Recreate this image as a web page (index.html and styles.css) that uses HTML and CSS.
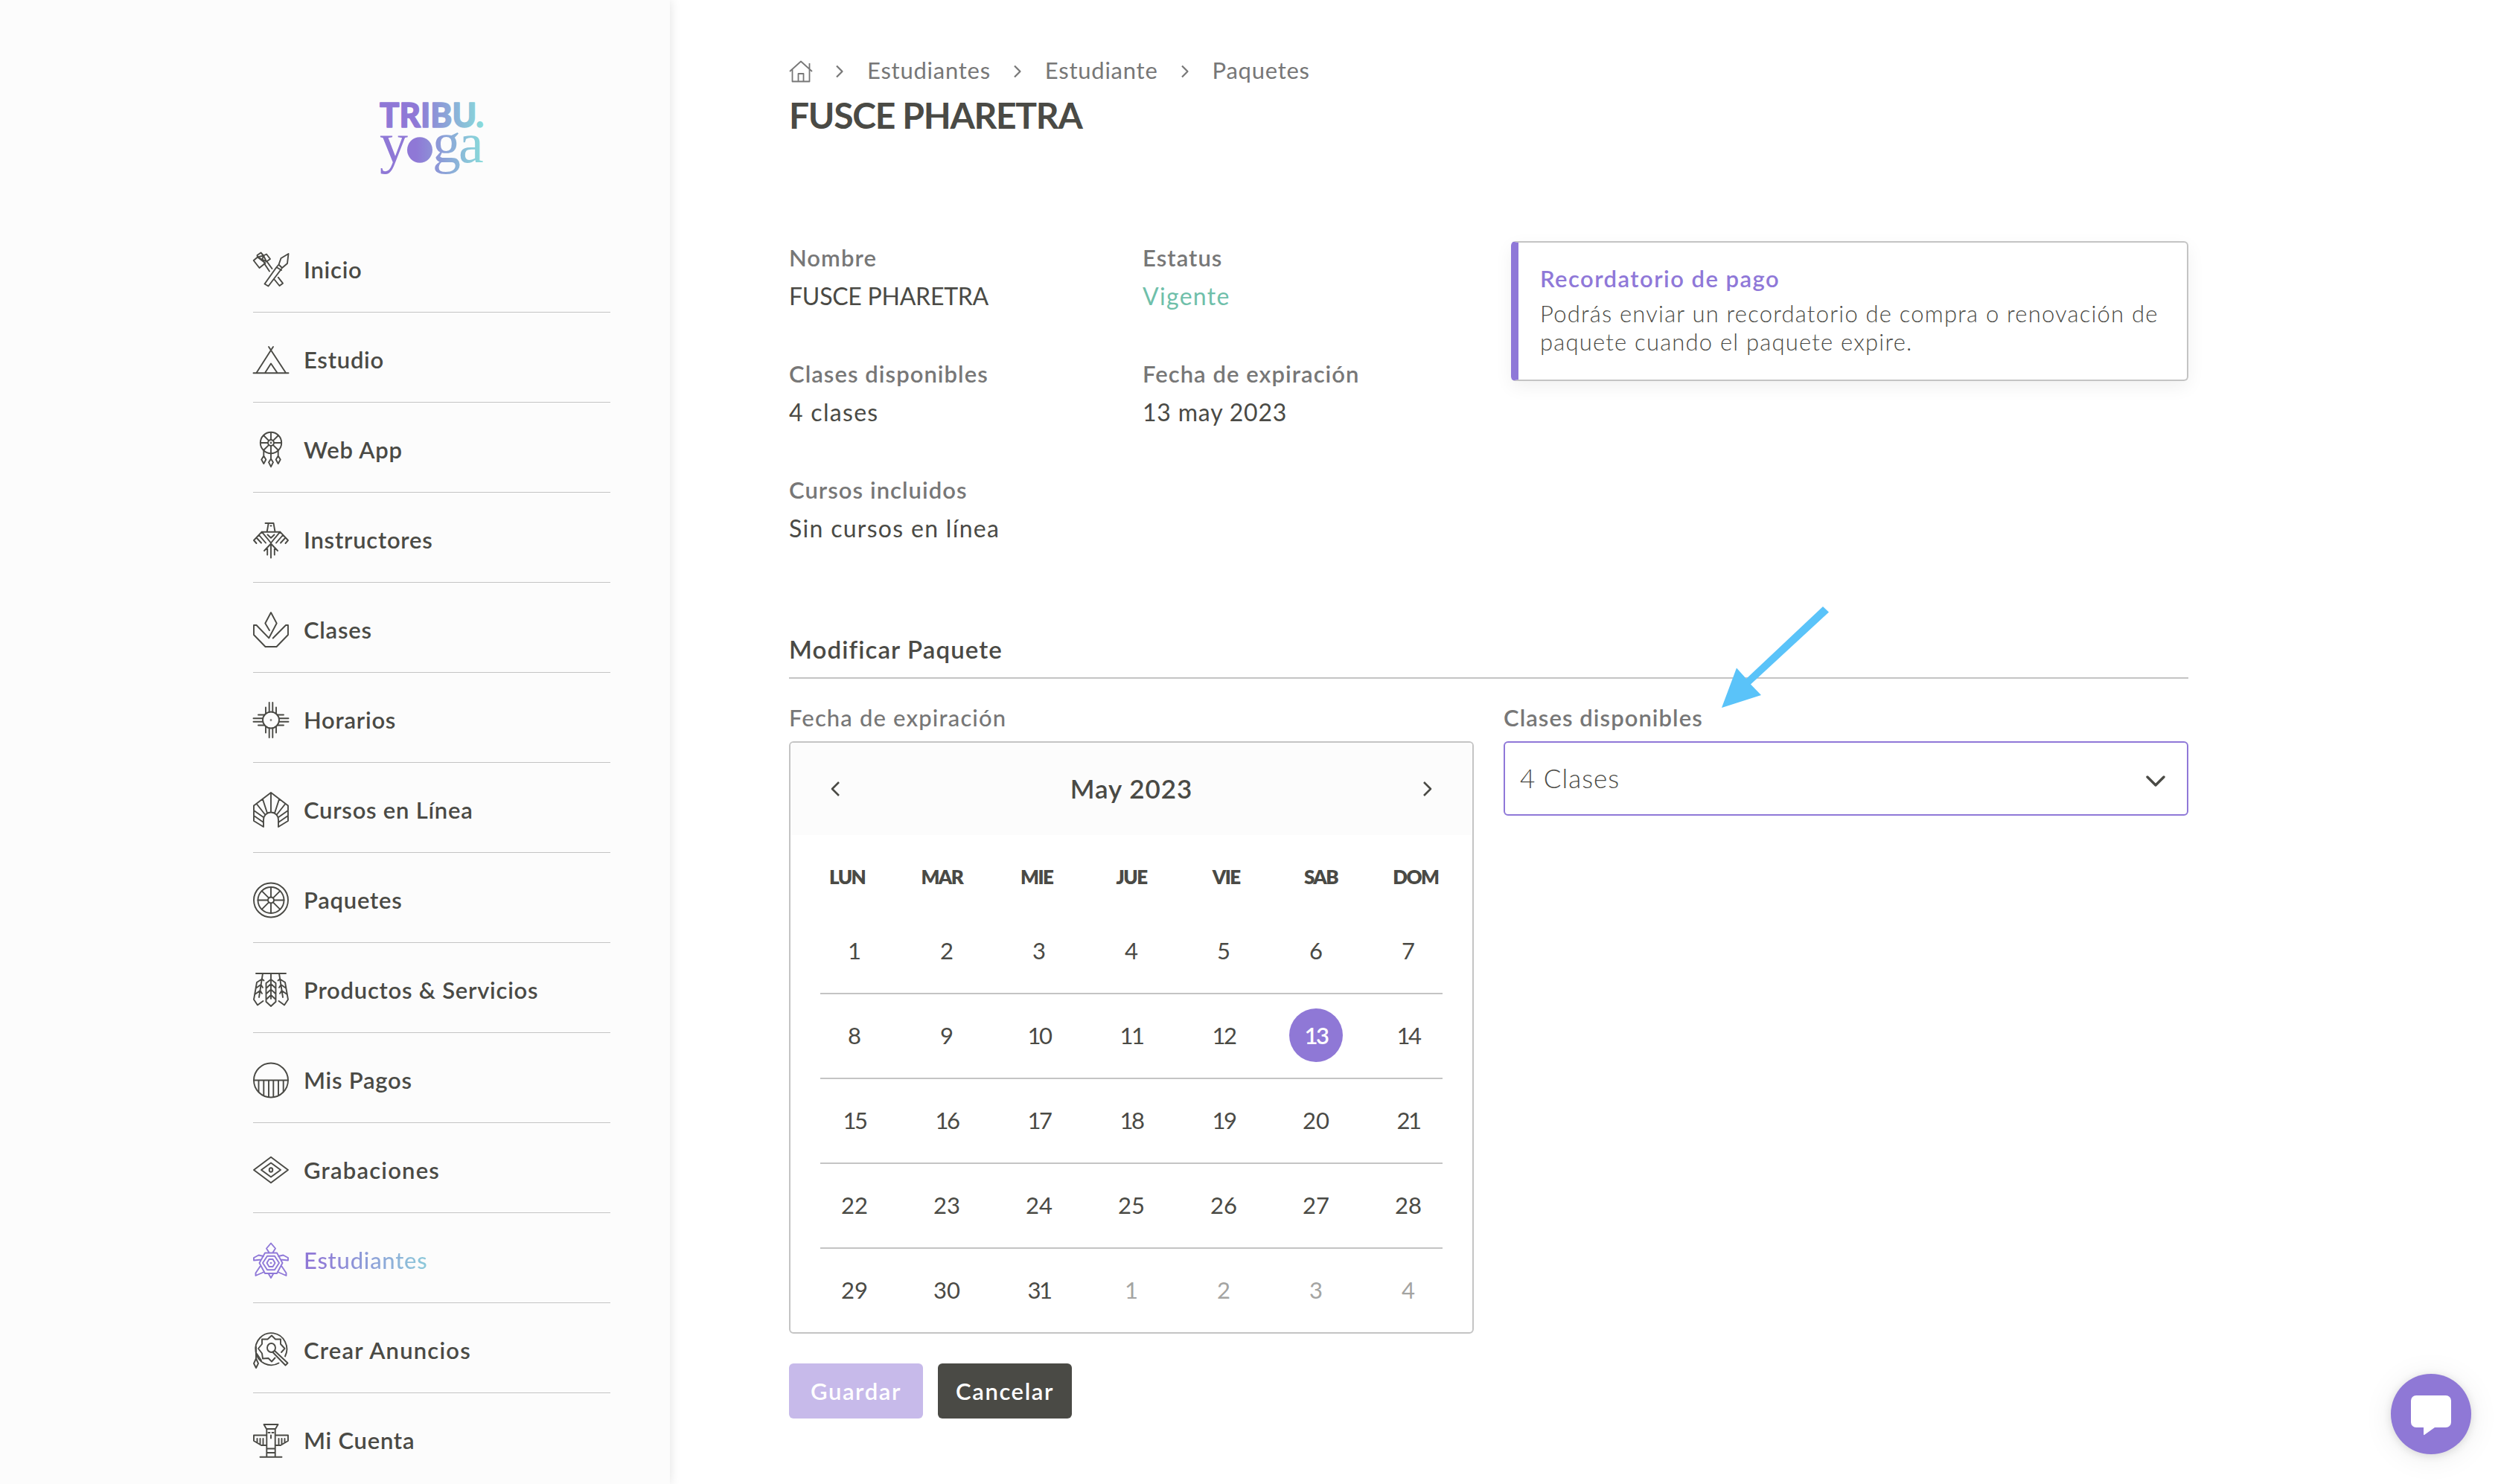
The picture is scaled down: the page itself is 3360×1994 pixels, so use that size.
FILE: index.html
```html
<!DOCTYPE html>
<html lang="es">
<head>
<meta charset="utf-8">
<title>Tribu Yoga</title>
<link rel="stylesheet" href="styles.css">
</head>
<body>
<aside class="sidebar">
  <svg class="logo" width="144" height="124" viewBox="508 120 144 124" role="img" aria-label="Tribu yoga">
    <defs><linearGradient id="brand" gradientUnits="userSpaceOnUse" x1="510" y1="0" x2="650" y2="0"><stop offset="0.35" stop-color="#8f78d6"/><stop offset="1" stop-color="#88dcda"/></linearGradient></defs>
    <g fill="url(#brand)">
      <text class="logo-sans" x="510" y="171" textLength="140" lengthAdjust="spacingAndGlyphs">TRIBU.</text>
      <text class="logo-serif" x="510" y="218">y</text>
      <ellipse cx="564" cy="201.500" rx="17" ry="17.300"/>
      <text class="logo-serif" x="581" y="218">g</text>
      <text class="logo-serif" x="616" y="218">a</text>
    </g>
  </svg>
  <nav class="nav">
    <a class="nav-item"><svg class="icon" viewBox="0 0 48 48"><path d="M47.5 3 37.5 9l-3 8.500 4.500 4.500 7-6zM34.500 17.500 31.500 21l6.500 4M31.500 21 15.500 43.500l5 3L38 23.500M33.700 34.700l6.300 8-4.500 3.300-6.500-8M.7 12 8.500 22l8-6.500L6 7.500zM6 7.500 5.500 5l5-3.500 3.500 4L6 7.500l12 6M14 5.500 18 3.500 23 10l-5 3.500L14 5.500l-2 6M15 16l7 10.500M19 14l6.500 9"/></svg><span>Inicio</span></a>
    <a class="nav-item"><svg class="icon" viewBox="0 0 48 48"><path d="M.5 42.300h47M21 7l3 4.500L27 7M4.500 42 24 11.500 44 42M16 42l8-12.500L32.500 42"/></svg><span>Estudio</span></a>
    <a class="nav-item"><svg class="icon" viewBox="0 0 48 48"><circle cx="24" cy="15" r="14.200"/><circle cx="24" cy="15" r="4"/><circle cx="24" cy="15" r=".5"/><path d="M24 1v10M24 19v18M10 15h10M28 15h10M14 5l7.200 7.200M34 5l-7.200 7.200M14 25l7.200-7.200M34 25l-7.200-7.200M14.300 25v7.500l3 5-3 5.500-3-5.500 3-5M33.700 25v7.500l3 5-3 5.500-3-5.500 3-5M24 36.500l3 4.700-3 6-3-6z"/></svg><span>Web App</span></a>
    <a class="nav-item"><svg class="icon" viewBox="0 0 48 48"><path d="M16.500 2h11l2 11.500M20.700 2l-2 11.500M23.500 5.500h1M11.700 13.700H36.300L24 28.500zM11.700 13.700 1 25l3.500 4M36.300 13.700 47 25l-3.500 4M4.500 21.500l6.500 7M8 18l9 10.500M43.500 21.500l-6.500 7M40 18l-9 10.500M19.500 17.500l4.500 4.300 4.500-4.300M24 28.500V48.500M15 39l9-9.500 9 9.500M19.200 34.500v10M28.800 34.500v10"/></svg><span>Instructores</span></a>
    <a class="nav-item"><svg class="icon" viewBox="0 0 48 48"><path d="M22 25l-5.700-9.500L24 1l7.700 14.500L21.300 35.300 4.500 18H1v13l15.500 16h15L47 31V18h-3L26.700 35.500"/></svg><span>Clases</span></a>
    <a class="nav-item"><svg class="icon" viewBox="0 0 48 48"><circle cx="24" cy="24.500" r="11"/><circle cx="24" cy="24.500" r=".4"/><path d="M21.700 1v12.500M26.300 1v12.500M21.700 35.500V48M26.300 35.500V48M.5 22.200H13M.5 26.800H13M35 22.200h12.500M35 26.800h12.500M17 7.500v8.500M31 7.500v8.500M17 33v8.500M31 33v8.500M7 17.500h8.500M7 31.500h8.500M32.500 17.500H41M32.500 31.500H41"/></svg><span>Horarios</span></a>
    <a class="nav-item"><svg class="icon" viewBox="0 0 48 48"><path d="M24 1l23 17.500V39l-13 8V37.500a10 10 0 0 0-20 0V47L1 39V18.500zM24 1v26.500M35 10l-6 18.500M13 10l6 18.500M43 16.500 31.500 31M5 16.500 16.500 31M47 25l-13.500 9.500M1 25l13.500 9.500M47 32l-13 9M1 32l13 9"/></svg><span>Cursos en Línea</span></a>
    <a class="nav-item"><svg class="icon" viewBox="0 0 48 48"><circle cx="24" cy="24.500" r="23"/><circle cx="24" cy="24.500" r="17.500"/><circle cx="24" cy="24.500" r="4"/><path d="M24 7v13.500M24 28.500V42M6.500 24.500H20M28 24.500h13.500M11.700 12.200l9.500 9.500M36.300 12.200l-9.500 9.500M11.700 36.800l9.500-9.500M36.300 36.800l-9.500-9.500"/></svg><span>Paquetes</span></a>
    <a class="nav-item"><svg class="icon" viewBox="0 0 48 48"><path d="M4 2h40M24 2v34M24 10l6.500 5v25L24 46l-6.500-6V15zM17.500 22l6.500-6 6.500 6M17.500 29.500l6.500-6 6.500 6M17.500 37l6.500-6 6.500 6M13 2 8 34M14.500 11.500 12 9.500 5 14 1 37l5 7.500 7.500-5.500M3.500 22l7-5 2.500 4M2.500 30l7-5 2.500 4M35 2l5 32M33.500 11.500l2.500-2 7 4.500 4 23-5 7.500-7.500-5.500M44.500 22l-7-5-2.500 4M45.500 30l-7-5-2.500 4"/></svg><span>Productos &amp; Servicios</span></a>
    <a class="nav-item"><svg class="icon" viewBox="0 0 48 48"><circle cx="24" cy="24.500" r="23"/><path d="M1 24.500h46M7.500 24.500V40M14.300 24.500V45M21 24.500V47M27.300 24.500V47M34 24.500V45M40.700 24.500V40"/></svg><span>Mis Pagos</span></a>
    <a class="nav-item"><svg class="icon" viewBox="0 0 48 48"><path d="M24 6.700 47 24 24 41.300 1 24zM24 14.500 37 24 24 33.500 11 24z"/><ellipse cx="24" cy="24" rx="2.300" ry="2.700"/></svg><span class="wide">Grabaciones</span></a>
    <a class="nav-item nav-item--active"><svg class="icon" viewBox="0 0 48 48"><path d="M21.500 14 18 8.500 24 1.500l6 7L26.500 14M16 14.500h16l7.500 13.500L32 42H16L8.500 28zM19 18.700h10L35 28l-6 9.300H19L13 28zM21.500 23h5l3 5-3 5h-5l-3-5zM23.500 28h1M14 19 7.500 17.500 1 21v3.500l10-1M34 19l6.500-1.500L47 21v3.500l-10-1M9.500 32.500 3.500 41.500v3.500L15 40M38.500 32.500l6 9v3.500L33 40M20.500 42 24 48l3.500-6"/></svg><span>Estudiantes</span></a>
    <a class="nav-item"><svg class="icon" viewBox="0 0 48 48"><path d="M34.500 41.500A21 21.500 0 1 1 43 32.500M29.500 34.500 25 39.500 20.500 35 13 35.500 12 28.500 7 22l5-6V9.500h7.500L25 4.500l5 5h7V16l5.500 6-4.500 5"/><ellipse cx="24.500" cy="21" rx="5.500" ry="6"/><path d="M29 25l17.500 16.500-3 3L26.500 27M4 20v15.500l3 6.500-3 6-3-6 3-6.500M5 29l6 9"/></svg><span class="wide">Crear Anuncios</span></a>
    <a class="nav-item"><svg class="icon" viewBox="0 0 48 48"><path d="M14.500 3h19L30 9H18zM18.300 9v37M29.700 9v37M9.500 46.700h29M18.300 35.500h11.400M18.300 41h11.400M20.500 14h2M25.500 14h2M24 17.500v4M18.300 17.500H1V25l10 6h7.300M29.700 17.500H47V25l-10 6h-7.300M5.500 22v5.500M9.500 22v7M13.500 22v8.500M42.500 22v5.500M38.500 22v7M34.500 22v8.500"/></svg><span>Mi Cuenta</span></a>
  </nav>
</aside>
<main class="main">
  <nav class="breadcrumb">
    <svg class="home" viewBox="0 0 32 30"><path d="M1 15 16 1.500 31 15M4.500 12.500V28.500h23V12.500M27.500 11V4M12.500 28V18h7v10"/></svg>
    <svg class="crumb-sep" viewBox="0 0 12 18"><path d="M2 1.500 9.500 9 2 16.500"/></svg>
    <span>Estudiantes</span>
    <svg class="crumb-sep" viewBox="0 0 12 18"><path d="M2 1.500 9.500 9 2 16.500"/></svg>
    <span>Estudiante</span>
    <svg class="crumb-sep" viewBox="0 0 12 18"><path d="M2 1.500 9.500 9 2 16.500"/></svg>
    <span>Paquetes</span>
  </nav>
  <h1 class="title">FUSCE PHARETRA</h1>
  <section class="summary">
    <dl class="facts">
      <div><dt>Nombre</dt><dd class="caps">FUSCE PHARETRA</dd></div>
      <div><dt>Estatus</dt><dd class="ok">Vigente</dd></div>
      <div><dt>Clases disponibles</dt><dd>4 clases</dd></div>
      <div><dt>Fecha de expiración</dt><dd class="date">13 may 2023</dd></div>
      <div><dt>Cursos incluidos</dt><dd>Sin cursos en línea</dd></div>
    </dl>
    <div class="notice">
      <h2 class="notice-title">Recordatorio de pago</h2>
      <p class="notice-text">Podrás enviar un recordatorio de compra o renovación de<br>paquete cuando el paquete expire.</p>
    </div>
  </section>
  <h2 class="section-title">Modificar Paquete</h2>
  <form class="form">
    <div class="field">
      <div class="label label--soft">Fecha de expiración</div>
      <div class="calendar">
        <header class="cal-head">
          <svg class="cal-arrow" viewBox="0 0 14 22"><path d="M12 2 3 11l9 9"/></svg>
          <span>May 2023</span>
          <svg class="cal-arrow" viewBox="0 0 14 22"><path d="M2 2l9 9-9 9"/></svg>
        </header>
        <div class="cal-days"><span>LUN</span><span>MAR</span><span>MIE</span><span>JUE</span><span>VIE</span><span>SAB</span><span>DOM</span></div>
        <div class="week"><div class="dates"><span>1</span><span>2</span><span>3</span><span>4</span><span>5</span><span>6</span><span>7</span></div></div>
        <div class="week"><div class="dates"><span>8</span><span>9</span><span class="slim">10</span><span class="slim">11</span><span class="slim">12</span><span class="slim selected">13</span><span class="slim">14</span></div></div>
        <div class="week"><div class="dates"><span class="slim">15</span><span class="slim">16</span><span class="slim">17</span><span class="slim">18</span><span class="slim">19</span><span>20</span><span class="slim">21</span></div></div>
        <div class="week"><div class="dates"><span>22</span><span>23</span><span>24</span><span>25</span><span>26</span><span>27</span><span>28</span></div></div>
        <div class="week"><div class="dates"><span>29</span><span>30</span><span class="slim">31</span><span class="out">1</span><span class="out">2</span><span class="out">3</span><span class="out">4</span></div></div>
      </div>
      <div class="actions"><button type="button" class="btn btn--save">Guardar</button><button type="button" class="btn btn--cancel">Cancelar</button></div>
    </div>
    <div class="field">
      <div class="label">Clases disponibles</div>
      <div class="select"><span>4 Clases</span><svg class="select-arrow" viewBox="0 0 26 16"><path d="M2 2l11 11L24 2"/></svg></div>
    </div>
  </form>
</main>
<svg class="pointer" viewBox="0 0 150 140"><path d="M139 2l8 7.500L42 106.500 56 121 3 138 23 84.500 36 99z"/></svg>
<div class="chat"><svg width="56" height="56" viewBox="0 0 56 56"><path d="M8 1h40a7 7 0 0 1 7 7v29a7 7 0 0 1-7 7H33L19 54q-1 .5-1-1V44H8a7 7 0 0 1-7-7V8a7 7 0 0 1 7-7z"/></svg></div>
</body>
</html>
```
FILE: styles.css
```css
* { box-sizing: border-box; margin: 0; }
body {
  display: flex;
  height: 1994px;
  overflow: hidden;
  background: #fff;
  color: #4a4a45;
  font: 400 31px/40px Lato, "Open Sans", sans-serif;
}
svg { display: block; flex: none; fill: none; stroke-linejoin: round; }

/* Sidebar */
.sidebar {
  flex: none;
  width: 900px;
  padding: 120px 80px 0 340px;
  background: #fcfcfc;
  box-shadow: 0 0 14px rgba(0, 0, 0, .12);
}
.logo { margin: 0 0 55px 168px; }
.logo-sans { font: 900 46px Lato, sans-serif; stroke: url(#brand); stroke-width: 1.400; }
.logo-serif { font: 400 76px "Liberation Serif", serif; }
.nav-item {
  display: flex;
  align-items: center;
  gap: 20px;
  height: 121px;
  padding: 39px 0 33px;
  border-bottom: 1px solid #c4c4c4;
  font-weight: 600;
  letter-spacing: .75px;
}
.nav-item:last-child { border-bottom: 0; padding-bottom: 34px; }
.nav-item .wide { letter-spacing: 1.200px; }
.icon { width: 48px; height: 48px; stroke: currentColor; stroke-width: 1.900; stroke-linecap: round; overflow: visible; }
.nav-item--active { color: #8f78d8; font-weight: 500; }
.nav-item--active span {
  background: linear-gradient(90deg, #8f78d6 10%, #8ccada);
  background-clip: text;
  color: transparent;
}

/* Content */
.main { flex: 1; padding: 74px 420px 0 160px; }
.breadcrumb { display: flex; align-items: center; height: 40px; color: #777; letter-spacing: .750px; }
.home { width: 32px; height: 30px; stroke: #777; stroke-width: 1.800; margin-top: 3px; }
.crumb-sep { width: 12px; height: 18px; margin: 4px 31px 0 30px; stroke: #777; stroke-width: 2.200; }
.title { margin-top: 11px; font-size: 48px; line-height: 60px; font-weight: 700; letter-spacing: -1.300px; }

.summary { display: grid; grid-template-columns: 1fr 910px; align-items: start; margin-top: 139px; }
.facts { display: grid; grid-template-columns: 475px 1fr; row-gap: 63px; padding-top: 2px; }
dt { color: #777; font-weight: 600; letter-spacing: 1.050px; }
dd { margin: 10px 0 -1px; font-size: 32px; line-height: 44px; letter-spacing: 1.300px; }
dd.caps { letter-spacing: -.250px; }
dd.date { letter-spacing: .800px; }
.ok { color: #6fbfaa; }
.notice {
  height: 188px;
  padding: 28px 20px 0 29px;
  border: 2px solid #c4c4c4;
  border-left: 10px solid #8f78d8;
  border-radius: 6px;
  box-shadow: 0 8px 24px rgba(0, 0, 0, .06);
}
.notice-title { margin-bottom: 8px; color: #8f78d8; font-size: 31px; line-height: 40px; font-weight: 600; letter-spacing: 1.450px; }
.notice-text { font-weight: 300; line-height: 38px; letter-spacing: 1.200px; white-space: nowrap; }

.section-title {
  margin-top: 119px;
  padding-bottom: 16px;
  border-bottom: 2px solid #c4c4c4;
  font-size: 33px;
  line-height: 44px;
  font-weight: 600;
  letter-spacing: 1.100px;
}
.form { display: grid; grid-template-columns: 920px 920px; gap: 40px; margin-top: 32px; }
.label { margin-bottom: 12px; color: #777; font-weight: 600; letter-spacing: 1.050px; }
.label--soft { font-weight: 500; letter-spacing: 1.150px; }

/* Calendar */
.calendar { height: 796px; border: 2px solid #c4c4c4; border-radius: 6px; overflow: hidden; }
.cal-head {
  display: flex;
  align-items: center;
  justify-content: space-between;
  height: 124px;
  padding: 0 53px;
  background: #fcfcfc;
  font-size: 35px;
  font-weight: 600;
  letter-spacing: 1px;
}
.cal-head span { margin-top: -3px; }
.cal-arrow { width: 14px; height: 22px; stroke: #4a4a45; stroke-width: 2.600; }
.cal-days {
  display: grid;
  grid-template-columns: repeat(7, 127.300px);
  justify-content: center;
  height: 100px;
  padding-top: 36px;
  text-align: center;
  font-size: 26px;
  font-weight: 800;
  letter-spacing: -1.500px;
}
.week { height: 114px; margin: 0 40px; border-bottom: 2px solid #c4c4c4; }
.week:last-child { border-bottom: 0; }
.dates { display: grid; grid-template-columns: repeat(7, 124px); margin: 0 -16px; padding-top: 19px; justify-items: center; }
.dates span { width: 72px; text-align: center; line-height: 72px; }
.dates .slim { letter-spacing: -2.500px; }
.dates .out { color: #a4a4a2; }
.dates .selected { border-radius: 50%; background: #8f78d6; color: #fff; font-weight: 600; }

.actions { display: flex; gap: 20px; margin-top: 40px; }
.btn { width: 180px; height: 74px; border: 0; border-radius: 6px; color: #fff; font: 600 31px/40px Lato, sans-serif; padding: 0; letter-spacing: 1.600px; }
.btn--save { background: #c7baea; }
.btn--cancel { background: #4a4a45; }

.select {
  display: flex;
  align-items: center;
  justify-content: space-between;
  height: 100px;
  padding: 0 29px 2px 20px;
  border: 2px solid #8f78d8;
  border-radius: 6px;
  font-size: 35px;
  font-weight: 300;
  letter-spacing: 1px;
}
.select-arrow { width: 26px; height: 16px; margin-top: 9px; stroke: #4a4a45; stroke-width: 3.400; stroke-linecap: round; }

/* Overlays */
.pointer { position: absolute; left: 2310px; top: 813px; width: 150px; height: 140px; fill: #5ac3f9; }
.chat {
  position: absolute;
  left: 3212px;
  top: 1846px;
  display: flex;
  align-items: center;
  justify-content: center;
  width: 108px;
  height: 108px;
  border-radius: 50%;
  background: #8f78d6;
  box-shadow: 0 2px 12px rgba(0, 0, 0, .12), 0 4px 40px rgba(0, 0, 0, .08);
}
.chat svg { fill: #fff; margin-top: 4px; }
```
